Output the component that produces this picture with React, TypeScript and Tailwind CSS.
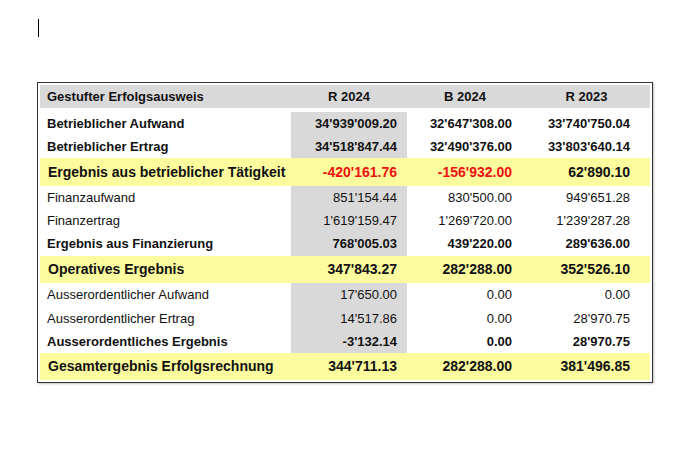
import React from 'react';

type RowKind = 'bold' | 'normal' | 'total';

interface Row {
  label: string;
  values: [string, string, string];
  kind: RowKind;
  h: string;
  red?: [boolean, boolean, boolean];
}

const rows: Row[] = [
  { label: 'Betrieblicher Aufwand', values: ["34'939'009.20", "32'647'308.00", "33'740'750.04"], kind: 'bold', h: 'h-[27px] pt-[4px]' },
  { label: 'Betrieblicher Ertrag', values: ["34'518'847.44", "32'490'376.00", "33'803'640.14"], kind: 'bold', h: 'h-[23px]' },
  { label: 'Ergebnis aus betrieblicher Tätigkeit', values: ["-420'161.76", "-156'932.00", "62'890.10"], kind: 'total', h: 'h-[28px]', red: [true, true, false] },
  { label: 'Finanzaufwand', values: ["851'154.44", "830'500.00", "949'651.28"], kind: 'normal', h: 'h-[23px]' },
  { label: 'Finanzertrag', values: ["1'619'159.47", "1'269'720.00", "1'239'287.28"], kind: 'normal', h: 'h-[23px]' },
  { label: 'Ergebnis aus Finanzierung', values: ["768'005.03", "439'220.00", "289'636.00"], kind: 'bold', h: 'h-[24px]' },
  { label: 'Operatives Ergebnis', values: ["347'843.27", "282'288.00", "352'526.10"], kind: 'total', h: 'h-[27px]' },
  { label: 'Ausserordentlicher Aufwand', values: ["17'650.00", '0.00', '0.00'], kind: 'normal', h: 'h-[24px]' },
  { label: 'Ausserordentlicher Ertrag', values: ["14'517.86", '0.00', "28'970.75"], kind: 'normal', h: 'h-[23px]' },
  { label: 'Ausserordentliches Ergebnis', values: ["-3'132.14", '0.00', "28'970.75"], kind: 'bold', h: 'h-[23px]' },
  { label: 'Gesamtergebnis Erfolgsrechnung', values: ["344'711.13", "282'288.00", "381'496.85"], kind: 'total', h: 'h-[27px]' },
];

const valuePad = ['pr-[10px]', 'pr-[11px]', 'pr-[20px]'];

const TableRow: React.FC<{ row: Row }> = ({ row }) => {
  const isTotal = row.kind === 'total';
  const text =
    row.kind === 'total' ? 'text-[14px] font-bold' : row.kind === 'bold' ? 'text-[13px] font-bold' : 'text-[13px]';

  return (
    <div className={`grid grid-cols-[251px_116px_116px_127px] ${row.h} ${isTotal ? 'bg-[#fcfc9e]' : ''}`}>
      <div className={`flex items-center ${isTotal ? 'pl-[8px]' : 'pl-[7px]'} ${text}`}>{row.label}</div>
      {row.values.map((v, i) => (
        <div
          key={i}
          className={`flex items-center justify-end ${valuePad[i]} ${text} ${
            i === 0 && !isTotal ? 'bg-[#d9d9d9]' : ''
          } ${row.red?.[i] ? 'text-[#ee1111]' : ''}`}
        >
          {v}
        </div>
      ))}
    </div>
  );
};

export default function App() {
  return (
    <div
      className="w-[690px] h-[460px] bg-white text-[#111] overflow-hidden"
      style={{ fontFamily: '"Liberation Sans", Arial, sans-serif' }}
    >
      {/* text cursor */}
      <div className="pl-[38px] pt-[19px]">
        <div className="w-px h-[18px] bg-black" />
      </div>

      <div className="ml-[37px] mt-[45px] w-[616px] border border-[#333] p-[2px] bg-white shadow-[1px_1px_2px_rgba(0,0,0,0.25)]">
        <div className="grid grid-cols-[251px_116px_116px_127px] h-[23px] bg-[#d9d9d9] text-[13px] font-bold">
          <div className="flex items-center pl-[7px]">Gestufter Erfolgsausweis</div>
          <div className="flex items-center justify-center">R 2024</div>
          <div className="flex items-center justify-center">B 2024</div>
          <div className="flex items-center justify-center">R 2023</div>
        </div>
        {rows.map((r) => (
          <TableRow key={r.label} row={r} />
        ))}
      </div>
    </div>
  );
}
